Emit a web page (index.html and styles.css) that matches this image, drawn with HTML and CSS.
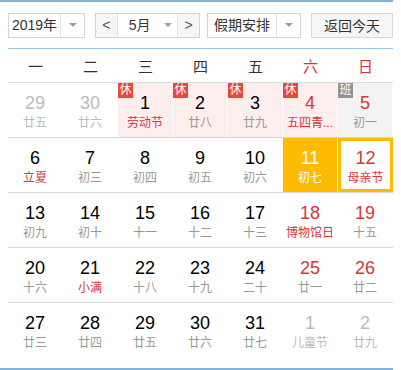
FILE: index.html
```html
<!DOCTYPE html>
<html lang="zh-CN">
<head>
    <meta charset="UTF-8">
    <title>万年历</title>
    <link rel="stylesheet" href="styles.css">
</head>
<body>
<div class="calendar">
    <div class="toolbar">
        <div class="select year">
            <span class="select-text">2019年</span>
            <span class="select-arrow"><i class="tri"></i></span>
        </div>
        <div class="select month">
            <span class="nav">&lt;</span>
            <span class="select-text">5月</span>
            <span class="month-arrow"><i class="tri"></i></span>
            <span class="nav next">&gt;</span>
        </div>
        <div class="select holiday">
            <span class="select-text">假期安排</span>
            <span class="select-arrow"><i class="tri"></i></span>
        </div>
        <button class="today">返回今天</button>
    </div>

    <div class="weekdays">
        <span>一</span><span>二</span><span>三</span><span>四</span><span>五</span>
        <span class="red">六</span><span class="red">日</span>
    </div>

    <div class="week">
        <div class="day other"><b>29</b><small>廿五</small></div>
        <div class="day other"><b>30</b><small>廿六</small></div>
        <div class="day rest"><em class="badge">休</em><b>1</b><small class="red">劳动节</small></div>
        <div class="day rest"><em class="badge">休</em><b>2</b><small>廿八</small></div>
        <div class="day rest"><em class="badge">休</em><b>3</b><small>廿九</small></div>
        <div class="day rest"><em class="badge">休</em><b class="red">4</b><small class="red">五四青...</small></div>
        <div class="day work"><em class="badge grey">班</em><b class="red">5</b><small>初一</small></div>
    </div>
    <div class="week">
        <div class="day"><b>6</b><small class="red">立夏</small></div>
        <div class="day"><b>7</b><small>初三</small></div>
        <div class="day"><b>8</b><small>初四</small></div>
        <div class="day"><b>9</b><small>初五</small></div>
        <div class="day"><b>10</b><small>初六</small></div>
        <div class="day today-cell"><b>11</b><small>初七</small></div>
        <div class="day selected"><b class="red">12</b><small class="red">母亲节</small></div>
    </div>
    <div class="week">
        <div class="day"><b>13</b><small>初九</small></div>
        <div class="day"><b>14</b><small>初十</small></div>
        <div class="day"><b>15</b><small>十一</small></div>
        <div class="day"><b>16</b><small>十二</small></div>
        <div class="day"><b>17</b><small>十三</small></div>
        <div class="day"><b class="red">18</b><small class="red">博物馆日</small></div>
        <div class="day"><b class="red">19</b><small>十五</small></div>
    </div>
    <div class="week">
        <div class="day"><b>20</b><small>十六</small></div>
        <div class="day"><b>21</b><small class="red">小满</small></div>
        <div class="day"><b>22</b><small>十八</small></div>
        <div class="day"><b>23</b><small>十九</small></div>
        <div class="day"><b>24</b><small>二十</small></div>
        <div class="day"><b class="red">25</b><small>廿一</small></div>
        <div class="day"><b class="red">26</b><small>廿二</small></div>
    </div>
    <div class="week last">
        <div class="day"><b>27</b><small>廿三</small></div>
        <div class="day"><b>28</b><small>廿四</small></div>
        <div class="day"><b>29</b><small>廿五</small></div>
        <div class="day"><b>30</b><small>廿六</small></div>
        <div class="day"><b>31</b><small>廿七</small></div>
        <div class="day other"><b>1</b><small>儿童节</small></div>
        <div class="day other"><b>2</b><small>廿九</small></div>
    </div>
</div>
</body>
</html>
```

FILE: styles.css
```css
body {
    margin: 0;
    font-family: "Liberation Sans", "Noto Sans CJK SC", sans-serif;
    background: #fff;
}

.calendar {
    width: 393px;
    height: 366px;
    border-top: 2px solid #7fb2dc;
    border-bottom: 2px solid #7fb2dc;
}

.toolbar {
    display: flex;
    align-items: center;
    margin-left: 8px;
    height: 46px;
    border-bottom: 1px solid #9cc4e4;
}

.select {
    display: flex;
    height: 23px;
    border: 1px solid #d4d4d4;
    font-size: 14px;
    color: #333;
    line-height: 23px;
}

.select-text {
    text-align: center;
}

.select-arrow {
    display: flex;
    align-items: center;
    justify-content: center;
    width: 23px;
    border-left: 1px solid #e2e2e2;
}

.tri {
    display: block;
    width: 0;
    height: 0;
    border-left: 4px solid transparent;
    border-right: 4px solid transparent;
    border-top: 4px solid #a0a0a0;
}

.year {
    width: 75px;
}

.year .select-text {
    width: 51px;
}

.month {
    width: 103px;
    margin-left: 10px;
}

.nav {
    width: 21px;
    text-align: center;
    background: #f6f6f6;
    color: #555;
    border-right: 1px solid #e2e2e2;
}

.nav.next {
    border-right: none;
    border-left: 1px solid #e2e2e2;
}

.month .select-text {
    width: 40px;
    padding-left: 2px;
}

.month-arrow {
    display: flex;
    align-items: center;
    justify-content: center;
    width: 18px;
}

.holiday {
    width: 92px;
    margin-left: 7px;
}

.holiday .select-text {
    width: 68px;
}

.today {
    margin-left: 10px;
    width: 82px;
    height: 25px;
    padding: 0;
    border: 1px solid #d9d9d9;
    background: #f6f6f6;
    font-family: inherit;
    font-size: 14px;
    color: #333;
}

.weekdays {
    display: grid;
    grid-template-columns: repeat(7, 55px);
    margin-left: 8px;
    height: 33px;
    line-height: 35px;
    border-bottom: 1px solid #dcdcdc;
    font-size: 15px;
    color: #333;
    text-align: center;
}

.week {
    display: grid;
    grid-template-columns: repeat(7, 55px);
    margin-left: 8px;
    border-bottom: 1px solid #d6d6d6;
}

.week.last {
    border-bottom: none;
}

.day {
    position: relative;
    display: flex;
    flex-direction: column;
    align-items: center;
    height: 54px;
    margin-right: 1px;
    box-sizing: border-box;
    padding-top: 9px;
}

.day b {
    font-weight: normal;
    font-size: 18px;
    line-height: 22px;
    color: #000;
}

.day small {
    font-size: 12px;
    line-height: 18px;
    color: #999;
}

.day .red {
    color: #d5363a;
}

.weekdays .red {
    color: #d5363a;
}

.other b,
.other small {
    color: #bbb;
}

.rest {
    background: #fdeeee;
}

.work {
    background: #f3f3f3;
}

.badge {
    position: absolute;
    left: 0;
    top: 0;
    width: 15px;
    height: 15px;
    line-height: 15px;
    font-size: 12px;
    font-style: normal;
    text-align: center;
    color: #fff;
    background: #e9463f;
}

.badge.grey {
    background: #929292;
}

.today-cell {
    background: #ffbb00;
}

.today-cell b,
.today-cell small {
    color: #fff;
}

.selected {
    border: 3px solid #ffbb00;
    padding-top: 6px;
    margin-right: 0;
}
```
